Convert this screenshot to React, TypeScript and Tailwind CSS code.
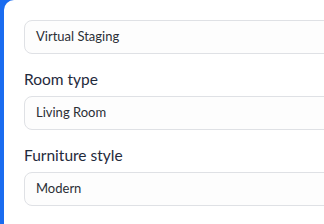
const fields = [
  { label: null, value: 'Virtual Staging' },
  { label: 'Room type', value: 'Living Room' },
  { label: 'Furniture style', value: 'Modern' },
];

export default function App() {
  return (
    <div className="w-[324px] h-[224px] overflow-hidden bg-[#1a6cf0] pl-[4px] font-['Lato',sans-serif]">
      <div className="h-full w-[360px] bg-white rounded-tl-[10px] pt-[20px] pl-[20px]">
        {fields.map((f, i) => (
          <div key={i} className={i === 0 ? '' : 'mt-[14px]'}>
            {f.label && (
              <div className="text-[15.5px] leading-[22px] text-[#1f2a3c] mb-[6px]">{f.label}</div>
            )}
            <div className="w-[340px] h-[34px] flex items-center px-[11px] border border-[#dfe1e5] rounded-[8px] bg-[#fdfdfd] text-[13px] text-[#2b2f36]">
              {f.value}
            </div>
          </div>
        ))}
      </div>
    </div>
  );
}
